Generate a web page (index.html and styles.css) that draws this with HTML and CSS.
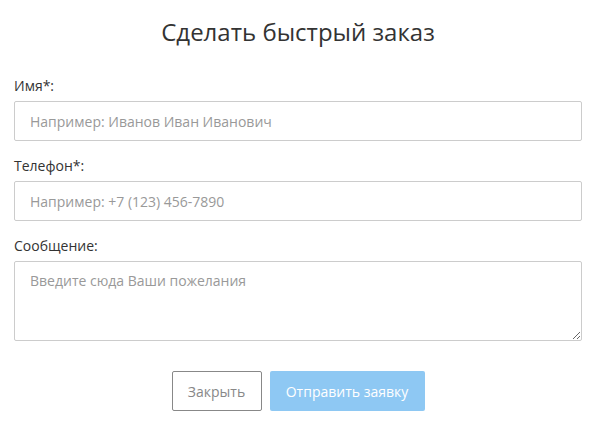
FILE: index.html
```html
<!DOCTYPE html>
<html lang="ru">
<head>
    <meta charset="UTF-8">
    <meta name="viewport" content="width=device-width, initial-scale=1.0">
    <title>Сделать быстрый заказ</title>
    <link rel="stylesheet" href="styles.css">
</head>
<body>
    <div class="container">
        <h2>Сделать быстрый заказ</h2>
        <form id="orderForm">
            <div class="form-group">
                <label for="name">Имя*:</label>
                <input type="text" id="name" name="name" placeholder="Например: Иванов Иван Иванович" required>
            </div>
            <div class="form-group">
                <label for="phone">Телефон*:</label>
                <input type="text" id="phone" name="phone" placeholder="Например: +7 (123) 456-7890" required>
            </div>
            <div class="form-group">
                <label for="message">Сообщение:</label>
                <textarea id="message" name="message" placeholder="Введите сюда Ваши пожелания"></textarea>
            </div>
            <div class="buttons">
                <button type="button" class="btn-close">Закрыть</button>
                <button type="button" class="btn-send">Отправить заявку</button>
            </div>
        </form>
    </div>
</body>
</html>
```

FILE: styles.css
```css
body {
    font-family: "Open Sans", Arial, sans-serif;
    background-color: #fff;
    margin: 0;
}
.container {
    padding: 14px 14px;
}
h2 {
    text-align: center;
    color: #333;
    font-weight: normal;
    font-size: 24px;
    line-height: 32px;
    margin: 2px 0 28px;
}
.form-group {
    margin-bottom: 15px;
}
label {
    display: block;
    font-size: 14px;
    line-height: 20px;
    color: #333;
    margin-bottom: 5px;
}
input[type="text"], textarea {
    display: block;
    width: 100%;
    height: 40px;
    padding: 0 15px;
    border: 1px solid #ccc;
    border-radius: 2px;
    box-sizing: border-box;
    font-family: "Open Sans", Arial, sans-serif;
    font-size: 14px;
    color: #333;
}
textarea {
    height: 80px;
    padding: 9px 15px;
    line-height: 20px;
    resize: vertical;
}
::placeholder {
    color: #999;
    opacity: 1;
}
.buttons {
    display: flex;
    justify-content: center;
    gap: 8px;
    margin-top: 30px;
}
button {
    height: 40px;
    font-family: "Open Sans", Arial, sans-serif;
    font-size: 14px;
    border-radius: 2px;
    cursor: pointer;
}
.btn-close {
    width: 90px;
    background-color: #fff;
    border: 1px solid #888;
    color: #888;
}
.btn-send {
    width: 155px;
    background-color: #8ec8f3;
    border: none;
    color: #fff;
}
```
